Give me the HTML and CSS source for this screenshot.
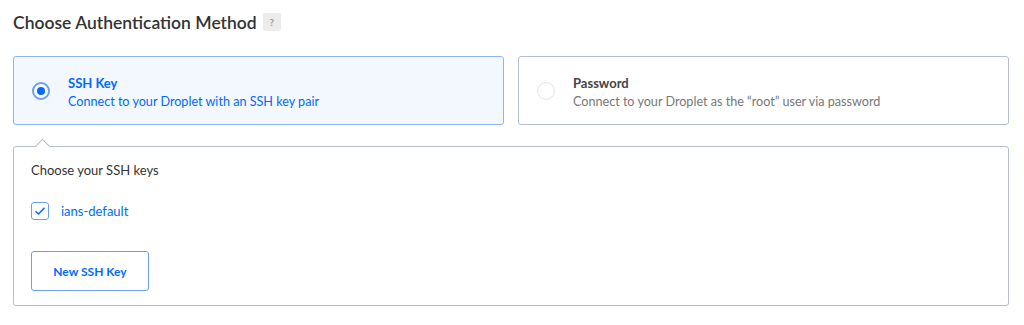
FILE: index.html
```html
<!DOCTYPE html>
<html lang="en">
<head>
    <meta charset="UTF-8">
    <title>Choose Authentication Method</title>
    <link rel="stylesheet" href="styles.css">
</head>
<body>
    <div class="auth">
        <h3 class="auth-title">Choose Authentication Method <span class="help">?</span></h3>
        <div class="methods">
            <label class="method selected">
                <span class="radio"></span>
                <span class="method-text">
                    <strong>SSH Key</strong>
                    <span>Connect to your Droplet with an SSH key pair</span>
                </span>
            </label>
            <label class="method">
                <span class="radio"></span>
                <span class="method-text">
                    <strong>Password</strong>
                    <span>Connect to your Droplet as the “root” user via password</span>
                </span>
            </label>
        </div>
        <div class="keys">
            <p class="keys-title">Choose your SSH keys</p>
            <label class="key">
                <span class="checkbox">
                    <svg width="12" height="10" viewBox="0 0 12 10"><path d="M1.5 5.2 L4.5 8 L10.5 1.8" fill="none" stroke="#0069ff" stroke-width="1.5"/></svg>
                </span>
                ians-default
            </label>
            <button class="new-key">New SSH Key</button>
        </div>
    </div>
</body>
</html>
```

FILE: styles.css
```css
* {
    margin: 0;
    padding: 0;
    box-sizing: border-box;
}
body {
    background: white;
    font-family: Lato, "Open Sans", sans-serif;
    color: #333;
}
.auth {
    padding: 12px 15px 0 13px;
}
.auth-title {
    display: flex;
    align-items: center;
    font-size: 17.5px;
    font-weight: 600;
    color: #333;
    height: 20px;
    margin-bottom: 24px;
}
.help {
    display: inline-flex;
    justify-content: center;
    align-items: center;
    width: 18px;
    height: 18px;
    margin-left: 6px;
    background: #ececec;
    color: #999;
    border-radius: 2px;
    font-size: 10px;
    font-weight: 700;
}
.methods {
    display: flex;
    gap: 14px;
}
.method {
    flex: 1;
    display: flex;
    align-items: center;
    height: 69px;
    padding-left: 18px;
    border: 1px solid #b5bdd1;
    border-radius: 3px;
    cursor: pointer;
}
.method.selected {
    background: #f3f8ff;
    border-color: #8cb5f5;
}
.radio {
    width: 18px;
    height: 18px;
    border-radius: 50%;
    border: 1px solid #e4e4e4;
    background: white;
    margin-right: 18px;
    position: relative;
    flex-shrink: 0;
}
.selected .radio {
    border: 2px solid #6c9ff0;
}
.selected .radio::before {
    content: '';
    position: absolute;
    top: 3px;
    left: 3px;
    width: 8px;
    height: 8px;
    border-radius: 50%;
    background: #0069ff;
}
.method-text {
    display: flex;
    flex-direction: column;
    gap: 3px;
    padding-top: 2px;
    font-size: 12.6px;
    color: #777;
}
.method-text strong {
    font-size: 13px;
    font-weight: 700;
    color: #444;
}
.selected .method-text,
.selected .method-text strong {
    color: #0069ff;
}
.keys {
    position: relative;
    margin-top: 21px;
    border: 1px solid #b5bdd1;
    border-radius: 3px;
    padding: 15px 17px 14px;
}
.keys::before {
    content: '';
    position: absolute;
    top: -6px;
    left: 23px;
    width: 10px;
    height: 10px;
    background: white;
    border-left: 1px solid #b5bdd1;
    border-top: 1px solid #b5bdd1;
    transform: rotate(45deg);
}
.keys-title {
    font-size: 13px;
    color: #333;
    margin-bottom: 24px;
}
.key {
    display: flex;
    align-items: center;
    font-size: 13px;
    color: #0069ff;
    margin-bottom: 31px;
}
.checkbox {
    display: inline-flex;
    justify-content: center;
    align-items: center;
    width: 18px;
    height: 18px;
    border: 1px solid #6c9ff0;
    border-radius: 3px;
    margin-right: 12px;
}
.new-key {
    width: 118px;
    height: 40px;
    background: white;
    border: 1px solid #6c9ff0;
    border-radius: 3px;
    color: #0069ff;
    font-family: inherit;
    font-size: 12px;
    font-weight: 700;
    cursor: pointer;
}
```
